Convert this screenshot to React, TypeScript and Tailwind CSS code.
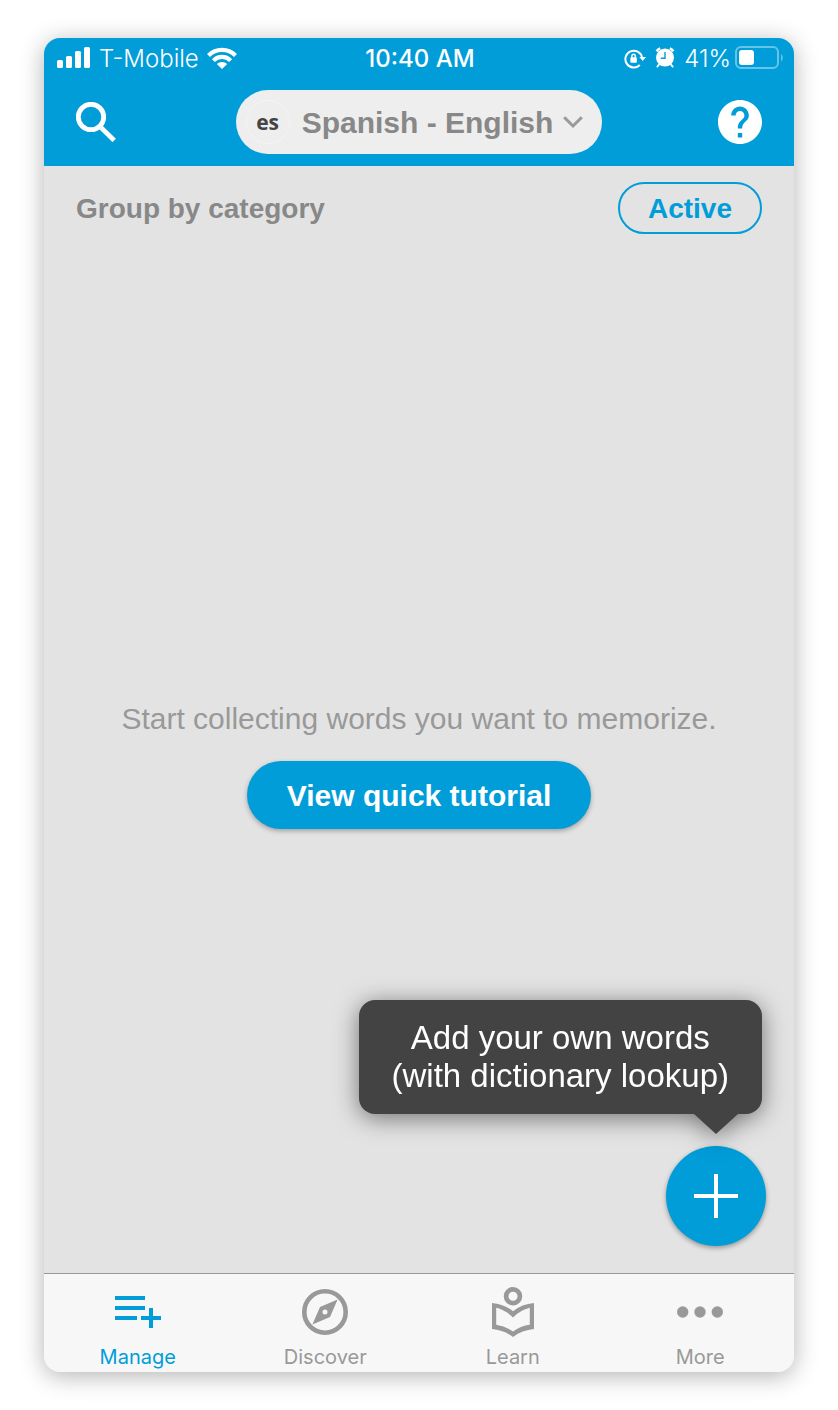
import type { ReactNode } from "react";

function SignalIcon() {
  return (
    <svg width="34" height="24" viewBox="0 0 34 24" fill="currentColor" aria-hidden="true">
      <rect x="0" y="13" width="6" height="8" rx="1.6" />
      <rect x="9" y="9" width="6" height="12" rx="1.6" />
      <rect x="18" y="4" width="6" height="17" rx="1.6" />
      <rect x="27" y="0" width="6" height="21" rx="1.6" />
    </svg>
  );
}

function WifiIcon() {
  return (
    <svg width="30" height="24" viewBox="0 0 30 24" fill="none" stroke="currentColor" strokeWidth="4.2" aria-hidden="true">
      <path d="M1.5 8.5a19 19 0 0 1 27 0" />
      <path d="M6.4 13.6a12 12 0 0 1 17.2 0" />
      <path d="M9.8 17.1a7.4 7.4 0 0 1 10.4 0L15 22z" fill="currentColor" stroke="none" />
    </svg>
  );
}

function RotationLockIcon() {
  return (
    <svg width="22" height="20" viewBox="0 0 22 20" fill="none" aria-hidden="true">
      <path d="M15.8 16A8.400 8.400 0 1 1 18 8.400" stroke="currentColor" strokeWidth="2" />
      <path d="M15.400 8h6.600l-3.300 4z" fill="currentColor" />
      <rect x="6.400" y="8.200" width="6.400" height="5.600" rx="0.8" fill="currentColor" />
      <path d="M7.900 9V6.900a1.700 1.700 0 0 1 3.400 0V9" stroke="currentColor" strokeWidth="1.500" />
    </svg>
  );
}

function AlarmIcon() {
  return (
    <svg width="20" height="24" viewBox="0 0 20 24" fill="none" aria-hidden="true">
      <circle cx="10" cy="10.600" r="9" fill="currentColor" />
      <path d="M1.500 4.200A10 10 0 0 1 5.200 1.300M18.500 4.200a10 10 0 0 0-3.700-2.900" stroke="currentColor" strokeWidth="2.400" />
      <path d="M4 17.600 2.300 19.600M16 17.600l1.700 2" stroke="currentColor" strokeWidth="1.800" strokeLinecap="round" />
      <path d="M10 5v6.200H5.800" stroke="#019dd9" strokeWidth="1.400" />
    </svg>
  );
}

function BatteryIcon() {
  return (
    <svg width="48" height="26" viewBox="0 0 48 26" fill="none" aria-hidden="true">
      <rect x="1" y="1" width="42" height="21" rx="5" stroke="#fff" strokeOpacity="0.4" strokeWidth="2" />
      <path d="M46 8c2.400 1.600 2.400 6 0 7.600z" fill="#fff" fillOpacity="0.4" />
      <rect x="4" y="4" width="15" height="15" rx="3" fill="#fff" />
    </svg>
  );
}

function SearchIcon() {
  return (
    <svg width="40" height="40" viewBox="0 0 40 40" fill="none" stroke="currentColor" strokeWidth="4.800" aria-hidden="true">
      <circle cx="15" cy="15" r="12.700" />
      <path d="M25.200 25.800 38.200 38.400" />
    </svg>
  );
}

function HelpIcon() {
  return (
    <svg width="44" height="44" viewBox="2 2 20 20" fill="currentColor" aria-hidden="true">
      <path d="M12 2C6.480 2 2 6.480 2 12s4.480 10 10 10 10-4.480 10-10S17.520 2 12 2zm1 17h-2v-2h2v2zm2.070-7.750l-.9.920C13.450 12.900 13 13.500 13 15h-2v-.5c0-1.100.450-2.100 1.170-2.830l1.240-1.260c.370-.360.590-.860.590-1.410 0-1.100-.9-2-2-2s-2 .9-2 2H8c0-2.210 1.790-4 4-4s4 1.790 4 4c0 .880-.360 1.680-.930 2.250z" />
    </svg>
  );
}

function ChevronIcon() {
  return (
    <svg width="20" height="14" viewBox="0 0 20 14" fill="none" stroke="#999" strokeWidth="3" aria-hidden="true">
      <path d="M1.200 2.200 10 11l8.800-8.800" />
    </svg>
  );
}

function ManageIcon() {
  return (
    <svg width="46" height="32" viewBox="0 0 46 32" fill="currentColor" aria-hidden="true">
      <path d="M0 0h30v4H0zM0 10h30v4H0zM0 20h22v4H0zM34 12h4v8h8v4h-8v8h-4v-8h-8v-4h8z" />
    </svg>
  );
}

function DiscoverIcon() {
  return (
    <svg width="46" height="46" viewBox="0 0 46 46" fill="none" aria-hidden="true">
      <circle cx="23" cy="23" r="20.700" stroke="currentColor" strokeWidth="4.600" />
      <path
        fill="currentColor"
        fillRule="evenodd"
        d="M35.600 10.400 28 28 10.400 35.600 18 18zM23 20.500a2.500 2.500 0 1 0 0 5 2.500 2.500 0 0 0 0-5z"
      />
    </svg>
  );
}

function LearnIcon() {
  return (
    <svg width="42" height="50" viewBox="0 0 42 50" fill="none" aria-hidden="true">
      <circle cx="21" cy="9.300" r="6.900" stroke="currentColor" strokeWidth="4.700" />
      <path
        fill="currentColor"
        fillRule="evenodd"
        d="M0 16Q12 17 21 24.200 30 17 42 16V42Q30 43 21 50 12 43 0 42zM4.200 20.800V37.800Q13.500 39 21 44.500 28.500 39 37.800 37.800V20.800Q28.500 23 21 30.500 13.500 23 4.200 20.800z"
      />
    </svg>
  );
}

function MoreIcon() {
  return (
    <svg width="46" height="12" viewBox="0 0 46 12" fill="currentColor" aria-hidden="true">
      <circle cx="5.700" cy="6" r="5.700" />
      <circle cx="23" cy="6" r="5.700" />
      <circle cx="40.300" cy="6" r="5.700" />
    </svg>
  );
}

function Tab({ label, icon, active = false }: { label: string; icon: ReactNode; active?: boolean }) {
  return (
    <a
      href="#"
      aria-current={active ? "page" : undefined}
      className={`flex flex-1 flex-col items-center pt-2.5 ${active ? "text-[#019dd9]" : "text-[#999]"}`}
    >
      <span className="flex h-14 items-center">{icon}</span>
      <span className="pt-0.5 font-['Inter',sans-serif] text-[20px] leading-[30px]">{label}</span>
    </a>
  );
}

export default function App() {
  return (
    <div className="flex min-h-screen flex-col bg-white px-11 py-[38px] font-['Liberation_Sans',Arial,sans-serif]">
      <div className="flex flex-1 flex-col overflow-hidden rounded-2xl bg-[#e3e3e3] shadow-[0_4px_24px_rgba(0,0,0,0.3)]">
        <header className="bg-[#019dd9] text-white">
          <div className="grid h-10 grid-cols-[1fr_auto_1fr] items-center pt-0.5 pr-[11px] pl-[13px] font-['Inter',sans-serif] text-[24px] leading-9">
            <div className="flex items-center gap-2">
              <SignalIcon />
              <span className="font-light">T-Mobile</span>
              <WifiIcon />
            </div>
            <time className="font-medium">10:40 AM</time>
            <div className="flex items-center justify-end">
              <RotationLockIcon />
              <span className="ml-[9px]">
                <AlarmIcon />
              </span>
              <span className="ml-[9px] font-light">41%</span>
              <span className="ml-1">
                <BatteryIcon />
              </span>
            </div>
          </div>
          <div className="grid h-22 grid-cols-[1fr_auto_1fr] items-center px-8">
            <button type="button" aria-label="Search" className="justify-self-start">
              <SearchIcon />
            </button>
            <button
              type="button"
              aria-haspopup="listbox"
              className="flex h-16 items-center rounded-full bg-[#eee] pr-[19px] pl-2.5 text-[30px] font-bold text-[#888]"
            >
              <span className="flex size-11 items-center justify-center rounded-full border border-[#f4f4f4] font-['Open_Sans',sans-serif] text-[21px] leading-6 font-bold text-[#444]">
                es
              </span>
              <span className="ml-3">Spanish - English</span>
              <span className="ml-2.5">
                <ChevronIcon />
              </span>
            </button>
            <button type="button" aria-label="Help" className="justify-self-end">
              <HelpIcon />
            </button>
          </div>
        </header>

        <main className="relative flex flex-1 flex-col">
          <div className="flex items-center justify-between px-8 py-4 text-[28px] font-bold">
            <h1 className="pt-0.5 text-[#888]">Group by category</h1>
            <button
              type="button"
              className="flex h-[52px] items-center rounded-full border-2 border-[#019dd9] px-7 pt-0.5 text-[#019dd9]"
            >
              Active
            </button>
          </div>

          <div className="flex flex-1 flex-col items-center justify-center gap-6 pt-1.5 text-[30px]">
            <p className="text-center leading-9 text-[#999]">Start collecting words you want to memorize.</p>
            <button
              type="button"
              className="h-[68px] rounded-full bg-[#019dd9] px-10 pt-0.5 font-bold text-white shadow-[0_2px_5px_rgba(0,0,0,0.3)]"
            >
              View quick tutorial
            </button>
          </div>

          <button
            type="button"
            aria-label="Add words"
            className="absolute right-7 bottom-[27px] flex size-[100px] items-center justify-center rounded-full bg-[#019dd9] text-white shadow-[0_2px_5px_rgba(0,0,0,0.35)]"
          >
            <svg width="44" height="44" viewBox="0 0 44 44" fill="currentColor" aria-hidden="true">
              <path d="M20 0h4v20h20v4H24v20h-4V24H0v-4h20z" />
            </svg>
          </button>
          <div
            role="tooltip"
            className="absolute right-8 bottom-[139px] flex flex-col items-end text-white drop-shadow-[0_4px_12px_rgba(0,0,0,0.5)]"
          >
            <p className="rounded-2xl bg-[#434343] px-[33px] py-[19px] text-center text-[33px] leading-[38px]">
              Add your own words
              <br />
              (with dictionary lookup)
            </p>
            <svg className="mr-6" width="44" height="20" viewBox="0 0 44 20" aria-hidden="true">
              <path d="M0 0h44L22 20z" fill="#434343" />
            </svg>
          </div>
        </main>

        <nav className="flex border-t border-[#999] bg-[#f7f7f7]">
          <Tab label="Manage" icon={<ManageIcon />} active />
          <Tab label="Discover" icon={<DiscoverIcon />} />
          <Tab label="Learn" icon={<LearnIcon />} />
          <Tab label="More" icon={<MoreIcon />} />
        </nav>
      </div>
    </div>
  );
}
